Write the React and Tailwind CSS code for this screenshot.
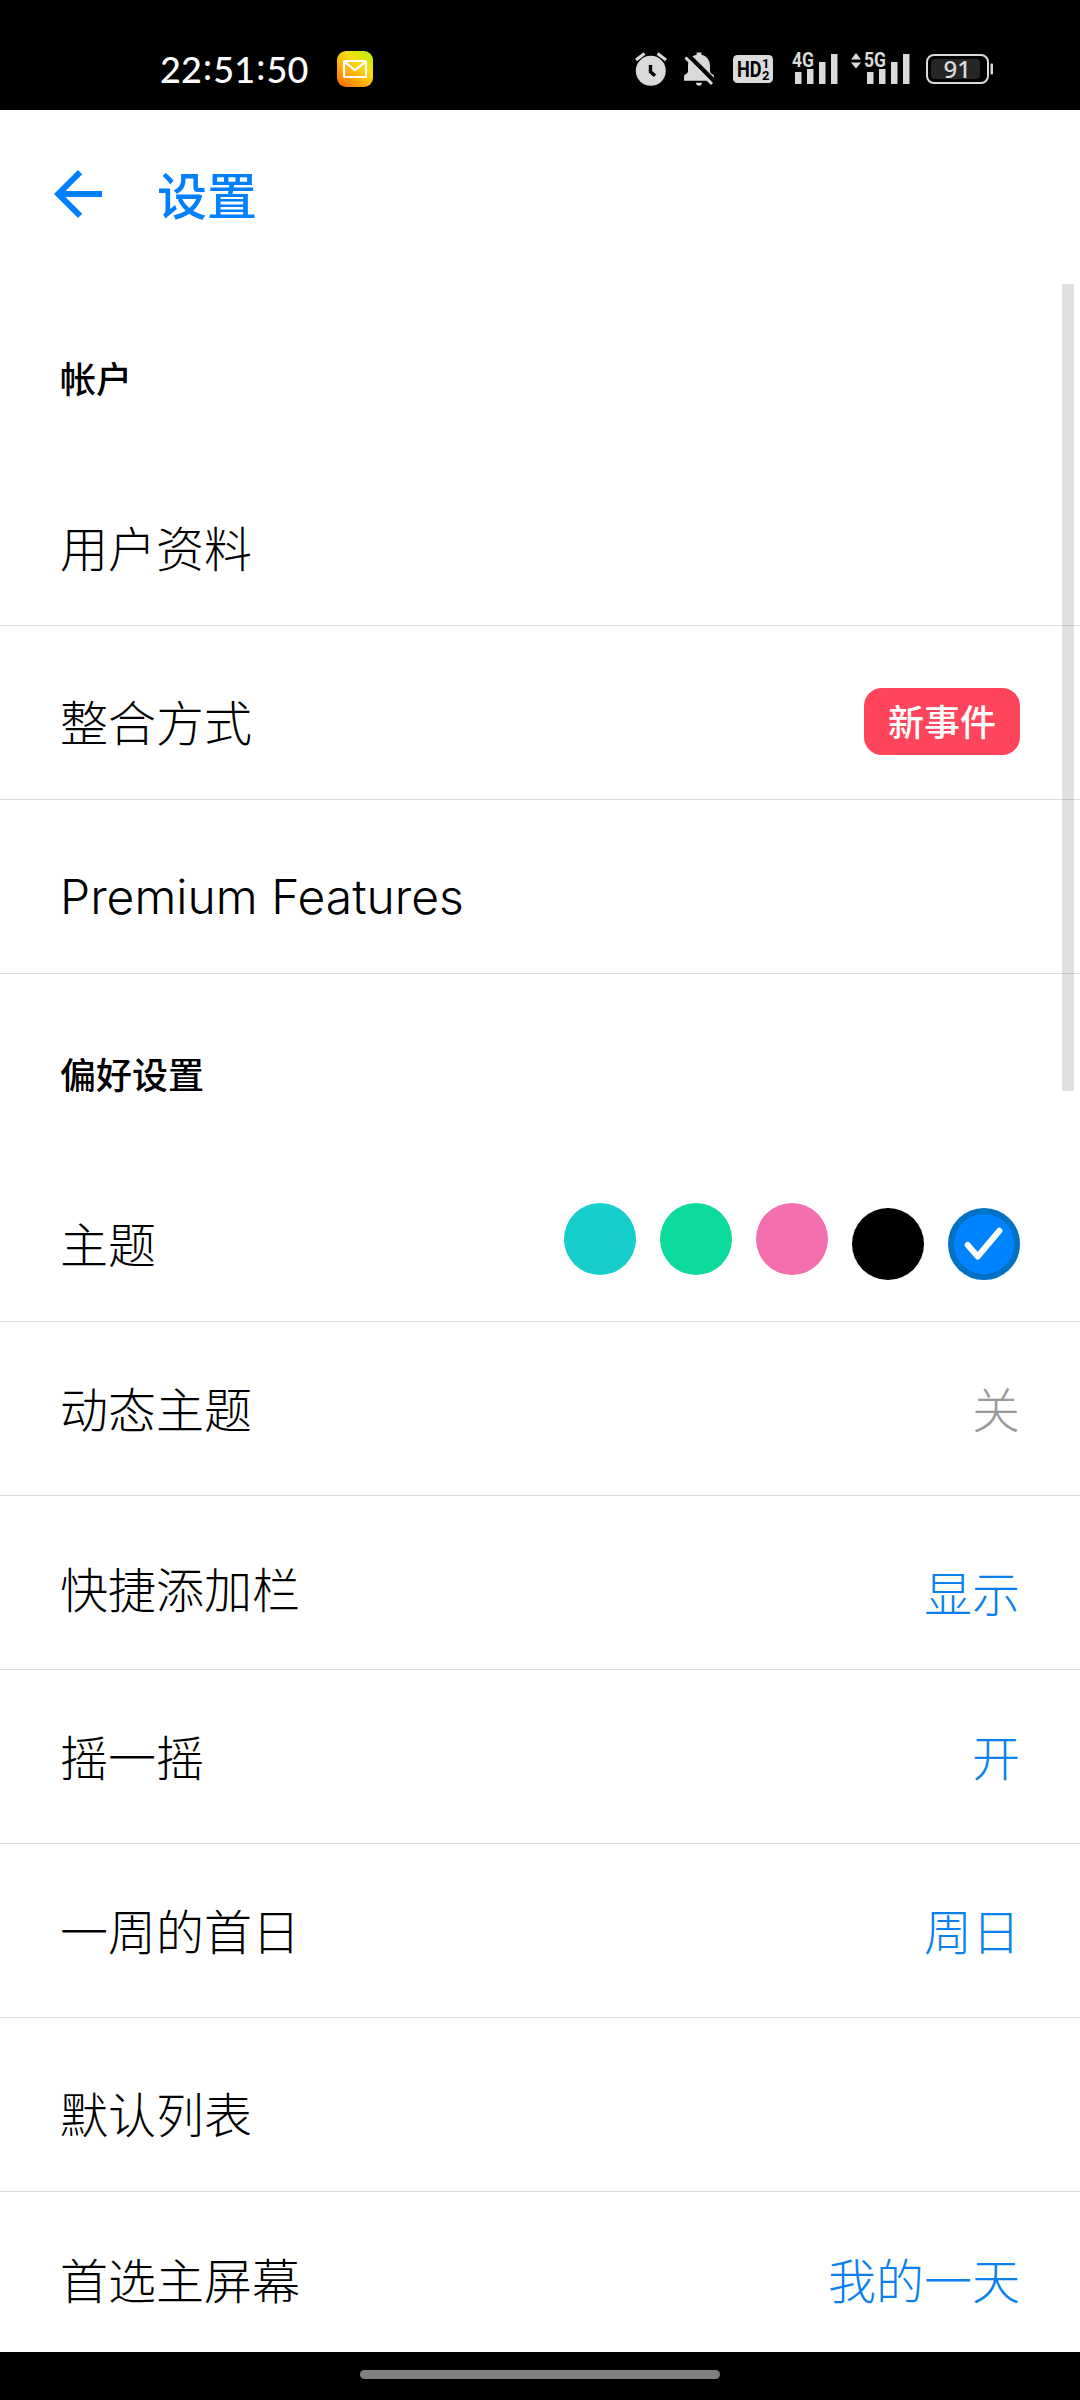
import React from "react";

const cjk = "font-['Noto_Sans_CJK_SC',sans-serif]";

const themes = [
  { name: "teal", className: "bg-[#15cdcb]" },
  { name: "green", className: "bg-[#0cda9d]" },
  { name: "pink", className: "bg-[#f26eac]" },
  { name: "black", className: "bg-black mt-[5px]" },
];

const MailIcon = () => (
  <svg className="w-9 h-9" viewBox="0 0 36 36">
    <defs>
      <linearGradient id="mail" x1="0.1" y1="1" x2="0.9" y2="0">
        <stop offset="0" stopColor="#ff6a00" />
        <stop offset="0.35" stopColor="#ffac08" />
        <stop offset="0.65" stopColor="#f8dc10" />
        <stop offset="1" stopColor="#b8f010" />
      </linearGradient>
    </defs>
    <rect width="36" height="36" rx="9" fill="url(#mail)" />
    <rect x="7" y="10" width="22" height="16" rx="1.5" fill="none" stroke="#fff" strokeWidth="2.2" />
    <path d="M7.5 10.8L18 19l10.5-8.2" fill="none" stroke="#fff" strokeWidth="2.2" />
  </svg>
);

const AlarmIcon = () => (
  <svg className="w-8 h-9" viewBox="635 51 32 36">
    <circle cx="650.8" cy="70.8" r="15" fill="#dadada" />
    <path d="M636 60l8.5-6.5M666 60l-8.5-6.5" stroke="#dadada" strokeWidth="3" />
    <path d="M650.5 65v6.8l4.5 4" fill="none" stroke="#000" strokeWidth="3.4" />
  </svg>
);

const BellOffIcon = () => (
  <svg className="w-8 h-9" viewBox="683 51 32 36">
    <path
      d="M684 80.8v-4.5c0-2 4-2.5 4-5.3v-5c0-6 3.5-10.2 8.6-11.2v-2.3h4.8v2.3c5.1 1 8.6 5.2 8.6 11.2v5c0 2.8 4 3.3 4 5.3v4.5z"
      fill="#dadada"
    />
    <path d="M696 82.8h6c0 4-6 4-6 0z" fill="#dadada" />
    <path d="M687.5 54.5l28 28" stroke="#000" strokeWidth="4.5" />
    <path d="M685.5 57.5l26.5 26.5" stroke="#dadada" strokeWidth="3" />
  </svg>
);

const HdIcon = () => (
  <svg className="w-10 h-7" viewBox="0 0 40 28" fontFamily="Roboto, sans-serif" fontWeight="700">
    <rect width="40" height="28" rx="4.5" fill="#dadada" />
    <text x="4" y="22" fontSize="22" textLength="24.5" lengthAdjust="spacingAndGlyphs">HD</text>
    <text x="29" y="13" fontSize="13">1</text>
    <text x="29" y="24.5" fontSize="13">2</text>
  </svg>
);

const SignalIcon = ({ label, arrows }) => (
  <svg className="w-[62px] h-[52px]" viewBox="0 -8 62 52">
    {arrows && <path d="M0 8.5l5-6.5 5 6.5zM0 11.5h10l-5 6z" fill="#dadada" />}
    <text
      x="13"
      y="16"
      fill="#dadada"
      fontFamily="Roboto, sans-serif"
      fontWeight="700"
      fontSize="20"
      textLength="22"
      lengthAdjust="spacingAndGlyphs"
    >
      {label}
    </text>
    <path d="M16 21h6.5v12H16zM28 18h6.5v15H28zM40 11h6.5v22H40zM52 3h6.5v30H52z" fill="#dadada" />
  </svg>
);

const BatteryIcon = () => (
  <svg className="w-[68px] h-[46px]" viewBox="0 -8 68 46">
    <rect x="1" y="1" width="61" height="28" rx="7" fill="none" stroke="#dadada" strokeWidth="2" />
    <rect x="5" y="5" width="49" height="20" rx="4" fill="#262626" />
    <rect x="64.5" y="9.5" width="2.5" height="11" rx="1" fill="#dadada" />
    <text x="17.5" y="23.5" fill="#dadada" fontFamily="Noto Sans, sans-serif" fontWeight="500" fontSize="24">
      91
    </text>
  </svg>
);

const StatusBar = () => (
  <div className="flex h-[110px] items-center bg-black pl-40 pt-7 text-white">
    <div className="flex w-[177px] font-['Lato',sans-serif] text-[36px] font-medium leading-9">
      <span>22</span>
      <span className="-mt-[3px] w-[11.5px] text-center">:</span>
      <span>51</span>
      <span className="-mt-[3px] w-[11.5px] text-center">:</span>
      <span>50</span>
    </div>
    <MailIcon />
    <div className="ml-[262px] flex items-center">
      <AlarmIcon />
      <span className="w-4" />
      <BellOffIcon />
      <span className="w-[18px]" />
      <HdIcon />
      <span className="w-1.5" />
      <SignalIcon label="4G" />
      <span className="w-2.5" />
      <SignalIcon label="5G" arrows />
      <span className="w-[13px]" />
      <BatteryIcon />
    </div>
  </div>
);

const Section = ({ title, className }) => (
  <h2 className={`flex items-center pl-[60px] text-[36px] font-medium leading-[52px] ${className}`}>{title}</h2>
);

const Row = ({ label, labelClass = "pb-[3px]", last, children }) => (
  <div
    className={`flex h-[174px] items-center justify-between px-[60px] text-[48px] font-light leading-[70px] ${
      last ? "" : "border-b border-[#dcdcdc]"
    }`}
  >
    <span className={labelClass}>{label}</span>
    {children}
  </div>
);

const Value = ({ className = "pb-[3px]", children }) => (
  <span className={`text-[#0a7fee] ${className}`}>{children}</span>
);

function App() {
  return (
    <div className={`relative flex h-[2400px] w-[1080px] flex-col overflow-hidden bg-white text-black ${cjk}`}>
      <StatusBar />

      {/* Title bar */}
      <header className="flex h-[174px] shrink-0 items-center pl-[42px] text-[#0080ff]">
        <svg className="mb-[6px] h-[72px] w-[72px]" viewBox="0 0 24 24" fill="currentColor">
          <path d="M20 11H7.83l5.59-5.59L12 4l-8 8 8 8 1.41-1.41L7.83 13H20v-2z" />
        </svg>
        <h1 className="mb-[9px] ml-[43px] text-[50px] font-medium leading-[72px]">设置</h1>
      </header>

      <main className="h-[2068px] shrink-0 overflow-hidden">
        <Section title="帐户" className="h-[168px] pt-[18px]" />
        <Row label="用户资料" labelClass="pt-[14px]" />
        <Row label="整合方式" labelClass="pt-[14px]">
          <span className="mt-[18px] flex h-[67px] w-[156px] items-center justify-center rounded-[18px] bg-[#ff445c] pb-[4px] text-[36px] font-medium leading-[52px] text-white">
            新事件
          </span>
        </Row>
        <Row label="Premium Features" labelClass="pt-5 font-['Inter',sans-serif] text-[48px]" />

        <Section title="偏好设置" className="h-[174px] pt-[24px]" />
        <Row label="主题" labelClass="pt-[14px]">
          <div className="flex items-start gap-6 pt-[14px]">
            {themes.map((theme) => (
              <span key={theme.name} className={`h-[72px] w-[72px] rounded-full ${theme.className}`} />
            ))}
            <svg className="mt-[5px] h-[72px] w-[72px]" viewBox="0 0 72 72">
              <circle cx="36" cy="36" r="33" fill="#0083ff" stroke="#0072c6" strokeWidth="6" />
              <path
                d="M19.7 37l10 11.5L51.4 22.7"
                fill="none"
                stroke="#fff"
                strokeWidth="6"
                strokeLinecap="round"
                strokeLinejoin="round"
              />
            </svg>
          </div>
        </Row>
        <Row label="动态主题">
          <span className="pb-[4px] text-[#999]">关</span>
        </Row>
        <Row label="快捷添加栏" labelClass="pt-[8px]">
          <Value className="pt-[16px]">显示</Value>
        </Row>
        <Row label="摇一摇">
          <Value>开</Value>
        </Row>
        <Row label="一周的首日">
          <Value>周日</Value>
        </Row>
        <Row label="默认列表" labelClass="pt-[15px]" />
        <Row label="首选主屏幕" last>
          <Value>我的一天</Value>
        </Row>
      </main>

      {/* Gesture bar */}
      <div className="flex h-12 shrink-0 justify-center bg-black pt-[18px]">
        <div className="h-[9px] w-[360px] rounded-full bg-[#808080]" />
      </div>

      {/* Scrollbar over the list */}
      <div className="absolute right-[6px] top-[284px] h-[807px] w-3 bg-black/12" />
    </div>
  );
}

export default App;
